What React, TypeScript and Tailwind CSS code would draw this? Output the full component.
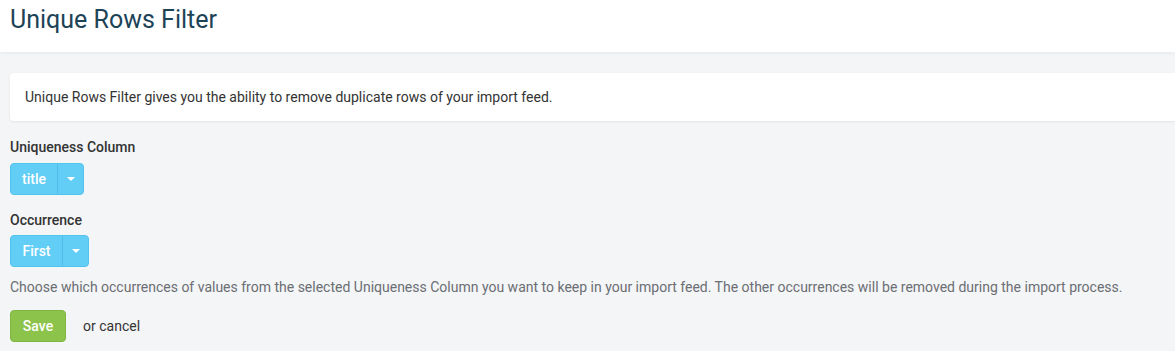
function SplitSelect({ value, width }: { value: string; width: string }) {
  return (
    <div className="inline-flex h-[32px] rounded-[4px] border border-[#52c3ee] bg-[#62cdf5] text-white">
      <button className={`${width} text-[14px] font-medium border-r border-[#4fbfe9]`}>{value}</button>
      <button className="w-[25px] flex items-center justify-center">
        <svg width="8" height="5" viewBox="0 0 8 5">
          <polygon points="0,0 8,0 4,4" fill="white" />
        </svg>
      </button>
    </div>
  );
}

export default function App() {
  return (
    <div
      className="min-h-[351px] bg-[#f4f5f7] overflow-hidden"
      style={{ fontFamily: "Roboto, 'Liberation Sans', sans-serif" }}
    >
      {/* Page header */}
      <header className="h-[52px] bg-white px-[10px] flex items-center shadow-[0_1px_4px_rgba(0,0,0,0.06)]">
        <h1 className="text-[25px] text-[#1c4356] leading-none -mt-[14px]">Unique Rows Filter</h1>
      </header>

      <main className="pl-[10px] pt-[21px]">
        {/* Info card */}
        <div className="h-[48px] bg-white rounded-l-[4px] shadow-[0_1px_3px_rgba(0,0,0,0.07)] flex items-center px-[15px] text-[14px] text-[#333]">
          Unique Rows Filter gives you the ability to remove duplicate rows of your import feed.
        </div>

        <div className="mt-[16px] text-[14px] font-medium text-[#333] leading-[20px]">Uniqueness Column</div>
        <div className="mt-[6px]">
          <SplitSelect value="title" width="w-[47px]" />
        </div>

        <div className="mt-[15px] text-[14px] font-medium text-[#333] leading-[20px]">Occurrence</div>
        <div className="mt-[5px]">
          <SplitSelect value="First" width="w-[52px]" />
        </div>

        <p className="mt-[10px] text-[14px] text-[#6b6e73] leading-[20px]">
          Choose which occurrences of values from the selected Uniqueness Column you want to keep in your import feed. The other occurrences will be removed during the import process.
        </p>

        <div className="mt-[13px] flex items-center">
          <button className="h-[32px] w-[56px] rounded-[4px] border border-[#80b543] bg-[#8cc34b] text-white text-[14px] font-medium">
            Save
          </button>
          <button className="ml-[17px] text-[14px] text-[#333]">or cancel</button>
        </div>
      </main>
    </div>
  );
}
